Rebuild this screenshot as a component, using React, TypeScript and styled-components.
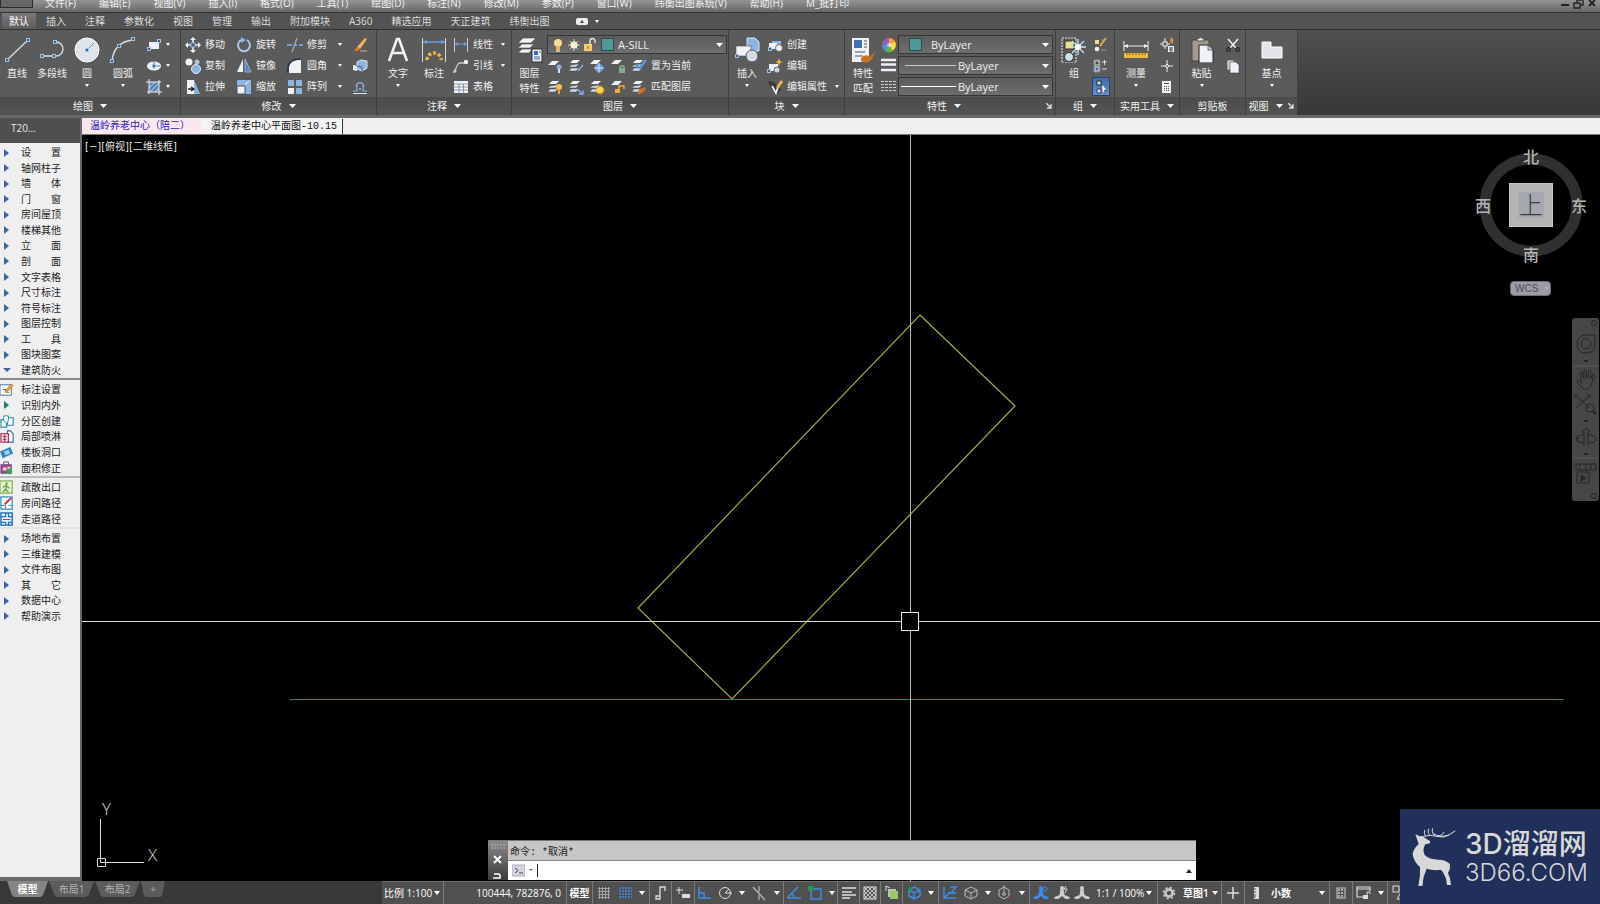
import React from 'react';
import styled, { createGlobalStyle } from 'styled-components';

const Global = createGlobalStyle`
  * { box-sizing: border-box; }
  body { margin: 0; background: #000; }
  button, select, input {
    font: inherit; color: inherit; background: none; border: 0; padding: 0; margin: 0; border-radius: 0;
  }
  button { cursor: default; }
  select { appearance: none; outline: none; }
  option { color: #000; }
  svg { display: block; flex: none; }
`;

const Page = styled.div`
  position: relative;
  display: flex;
  flex-direction: column;
  min-height: 100vh;
  overflow: hidden;
  font: 10px/15px 'Open Sans', 'Noto Sans CJK SC', sans-serif;
  color: #f0f0f0;
  background: #3a3a3a;
`;

/* ---------- menu bar and ribbon tabs ---------- */

const MenuBar = styled.nav`
  display: flex;
  align-items: flex-end;
  height: 13px;
  overflow: hidden;
  background: linear-gradient(#949494, #686868);
  border-bottom: 1px solid #333;
`;
const AppButton = styled.button`
  width: 33px;
  height: 9px;
  margin-bottom: 4px;
  background: #666;
  border: 1px solid #2c2c2c;
  border-top: 0;
`;
const MenuList = styled.div`
  display: flex;
  flex: 1;
  gap: 23px;
  padding-left: 12px;
  height: 16px;
  margin-bottom: -1px;
  align-items: flex-start;
`;
const MenuItem = styled.button`
  height: 12px;
  line-height: 12px;
  white-space: nowrap;
`;
const WindowButtons = styled.div`
  display: flex;
  gap: 2px;
  padding-right: 1px;
  align-items: flex-end;
`;
const WindowButton = styled.button`
  width: 12px;
  height: 12px;
`;

const TabBar = styled.div`
  display: flex;
  gap: 1px;
  height: 17px;
  background: #535353;
  border-bottom: 1px solid #303030;
`;
const RibbonTab = styled.button<{ $active?: boolean }>`
  height: 16px;
  line-height: 16px;
  padding: 0 ${p => (p.$active ? 7 : 9)}px;
  margin-left: ${p => (p.$active ? 2 : 0)}px;
  color: ${p => (p.$active ? '#fff' : '#dcdcdc')};
  background: ${p => (p.$active ? 'linear-gradient(#7a7a7a, #5c5c5c)' : 'none')};
  white-space: nowrap;
`;
const TabToggle = styled.button`
  display: flex;
  align-items: center;
  gap: 7px;
  padding-left: 17px;
`;

/* ---------- ribbon ---------- */

const RibbonBar = styled.div`
  display: flex;
  height: 88px;
  background: linear-gradient(#505050, #383838);
  border-bottom: 3px solid #686868;
`;
const PanelBox = styled.section<{ $w: number }>`
  flex: none;
  width: ${p => p.$w}px;
  display: flex;
  flex-direction: column;
  border-right: 1px solid #3f3f3f;
  background: #5b5b5b;
`;
const PanelBody = styled.div`
  flex: 1;
  display: flex;
  padding-top: 4px;
`;
const PanelTitle = styled.button<{ $right: number }>`
  position: relative;
  display: flex;
  align-items: center;
  justify-content: center;
  gap: 7px;
  height: 18px;
  padding-right: ${p => p.$right}px;
  background: linear-gradient(#4c4c4c, #535353);
`;
const Launcher = styled.span`
  position: absolute;
  right: 3px;
  top: 6px;
`;
const BigButton = styled.button<{ $w: number }>`
  flex: none;
  width: ${p => p.$w}px;
  display: flex;
  flex-direction: column;
  align-items: center;
  justify-content: flex-start;
`;
const BigIcon = styled.span`
  height: 32px;
  display: flex;
  align-items: center;
`;
const BigCaret = styled.span`
  height: 9px;
  display: flex;
  align-items: center;
`;
const Column = styled.div<{ $ml?: number }>`
  display: flex;
  flex-direction: column;
  flex: none;
  margin-left: ${p => p.$ml ?? 0}px;
`;
const Row = styled.div<{ $gap?: number }>`
  display: flex;
  align-items: center;
  gap: ${p => p.$gap ?? 0}px;
  height: 21px;
`;
const SmallButton = styled.button<{ $w?: number; $on?: boolean }>`
  display: flex;
  align-items: center;
  gap: 4px;
  height: 19px;
  min-width: 16px;
  width: ${p => (p.$w ? p.$w + 'px' : 'auto')};
  justify-content: flex-start;
  white-space: nowrap;
  padding: ${p => (p.$on ? '0 1px' : '0')};
  background: ${p => (p.$on ? 'linear-gradient(#3f68a8, #6a93cf)' : 'none')};
  box-shadow: ${p => (p.$on ? 'inset 0 0 0 1px #27426e' : 'none')};
`;
const SmallLabel = styled.span`
  flex: 1;
  text-align: left;
`;
const Combo = styled.label<{ $w: number }>`
  display: flex;
  align-items: center;
  width: ${p => p.$w}px;
  height: 19px;
  padding: 0 3px 0 2px;
  border: 1px solid #363636;
  background: linear-gradient(#5c5c5c, #6e6e6e);
`;
const ComboSelect = styled.select<{ $pad?: number }>`
  flex: 1;
  min-width: 0;
  height: 17px;
  padding-left: ${p => p.$pad ?? 0}px;
  font-size: 11px;
`;
const Swatch = styled.span<{ $ml: number }>`
  width: 13px;
  height: 13px;
  margin-left: ${p => p.$ml}px;
  background: #4f9a96;
  border: 1px solid #2b4a48;
`;
const LineSample = styled.span<{ $thick?: boolean }>`
  width: ${p => (p.$thick ? 55 : 51)}px;
  height: 1px;
  margin-left: ${p => (p.$thick ? 0 : 4)}px;
  background: ${p => (p.$thick ? '#fff' : '#c8c8c8')};
`;

/* ---------- work area ---------- */

const Work = styled.div`
  flex: 1;
  display: flex;
`;
const Sidebar = styled.aside`
  display: flex;
  flex-direction: column;
  width: 82px;
  background: #efefef;
  border-right: 2px solid #6a6a6a;
  border-bottom: 4px solid #6a6a6a;
  color: #1c1c1c;
`;
const SidebarHeader = styled.h1`
  margin: 0;
  height: 25px;
  padding-left: 11px;
  font-size: 10px;
  font-weight: 400;
  line-height: 20px;
  color: #e8e8e8;
  background: #4f4f4f;
`;
const MenuGroup = styled.div<{ $h: number; $line?: string }>`
  display: grid;
  grid-auto-rows: 1fr;
  height: ${p => p.$h}px;
  padding-top: 2px;
  border-bottom: ${p => (p.$line ? '2px solid ' + p.$line : '0')};
`;
const SideItem = styled.button`
  display: flex;
  align-items: center;
  min-height: 0;
  height: 100%;
  line-height: 15px;
  white-space: pre;
`;
const SideIcon = styled.span<{ $arrow?: boolean }>`
  width: 21px;
  padding-left: ${p => (p.$arrow ? 3 : 0)}px;
`;
const Main = styled.main`
  flex: 1;
  min-width: 0;
  display: flex;
  flex-direction: column;
`;
const DocTabs = styled.div`
  display: flex;
  height: 17px;
  padding-top: 1px;
  background: #efefef;
  border-bottom: 1px solid #777;
`;
const DocTab = styled.button<{ $current?: boolean }>`
  padding: 0 ${p => (p.$current ? 5 : 11)}px 0 ${p => (p.$current ? 10 : 8)}px;
  height: 15px;
  line-height: 15px;
  font-family: 'Liberation Mono', 'Noto Sans CJK SC', monospace;
  color: ${p => (p.$current ? '#111' : '#2a22b8')};
  background: ${p => (p.$current ? '#f4f4f4' : '#fbe8ee')};
  border-right: ${p => (p.$current ? '1px solid #333' : '0')};
  white-space: nowrap;
`;
const Canvas = styled.div`
  position: relative;
  flex: 1;
  background: #000;
  overflow: hidden;
`;
const Drawing = styled.svg`
  position: absolute;
  inset: 0;
  width: 100%;
  height: 100%;
`;
const ViewLabel = styled.div`
  position: absolute;
  left: 3px;
  top: 4px;
  font-family: 'DejaVu Sans', 'Noto Sans CJK SC', sans-serif;
  color: #e6e6e6;
`;
const Compass = styled.div`
  position: absolute;
  right: 15px;
  top: 12px;
  width: 112px;
  height: 120px;
`;
const CompassPoint = styled.button<{ $x: number; $y: number }>`
  position: absolute;
  left: ${p => p.$x}px;
  top: ${p => p.$y}px;
  width: 20px;
  height: 20px;
  line-height: 20px;
  font-size: 16px;
  font-weight: 500;
  color: #b4b4b4;
`;
const CubeFace = styled.button`
  position: absolute;
  left: 36px;
  top: 36px;
  width: 44px;
  height: 44px;
  padding: 8px;
  background: #b4b4b2;
  border: 1px solid #c6c6c4;
`;
const FaceLabel = styled.span`
  display: block;
  height: 26px;
  line-height: 26px;
  font-size: 24px;
  font-weight: 300;
  color: #3c3c40;
  background: #a6a8b0;
`;
const Wcs = styled.button`
  position: absolute;
  right: 49px;
  top: 146px;
  width: 41px;
  height: 15px;
  padding-left: 4px;
  display: flex;
  align-items: center;
  gap: 6px;
  font: 10px/13px 'Liberation Sans', sans-serif;
  color: #4c4c58;
  background: #9c9ca6;
  border: 1px solid #70707a;
  border-radius: 4px;
`;
const NavBar = styled.div`
  position: absolute;
  right: 1px;
  top: 183px;
  width: 27px;
  height: 183px;
  background: #464646;
  border-radius: 3px;
`;
const CommandWindow = styled.form`
  position: absolute;
  left: 406px;
  bottom: 1px;
  width: 708px;
  height: 40px;
  display: flex;
  border-top: 1px solid #777;
`;
const CommandGrip = styled.div`
  width: 20px;
  display: flex;
  flex-direction: column;
  align-items: center;
  background: linear-gradient(#8a8a8a, #3c3c3c);
`;
const CommandBody = styled.div`
  flex: 1;
  display: flex;
  flex-direction: column;
  font-family: 'Liberation Mono', 'Noto Sans CJK SC', monospace;
  color: #222;
`;
const History = styled.output`
  height: 20px;
  line-height: 15px;
  padding: 4px 0 0 2px;
  background: #c6c6c6;
  border-bottom: 1px solid #8a8a8a;
`;
const Prompt = styled.label`
  flex: 1;
  display: flex;
  align-items: center;
  gap: 4px;
  padding: 0 4px;
  background: #fff;
`;
const CommandInput = styled.input`
  flex: 1;
  height: 13px;
  border-left: 1px solid #222;
  outline: none;
`;

/* ---------- status bar ---------- */

const Footer = styled.footer`
  display: flex;
  height: 23px;
  background: #393939;
`;
const LayoutTabs = styled.div`
  display: flex;
  width: 382px;
  padding-left: 7px;
`;
const LayoutTab = styled.button<{ $w: number; $active?: boolean }>`
  width: ${p => p.$w}px;
  height: 16px;
  margin-right: 1px;
  clip-path: polygon(0 0, 100% 0, 88% 88%, 82% 100%, 18% 100%, 12% 88%);
  background: ${p => (p.$active ? '#858585' : '#5c5c5c')};
  color: ${p => (p.$active ? '#fff' : '#b4b4b4')};
  font-weight: ${p => (p.$active ? 700 : 400)};
`;
const StatusBar = styled.div`
  flex: 1;
  min-width: 0;
  display: flex;
  overflow: hidden;
  background: #505050;
  border-top: 1px solid #707070;
`;
const Cell = styled.div<{ $w: number; $sep?: boolean; $pad?: number; $end?: boolean; $bold?: boolean }>`
  flex: none;
  width: ${p => p.$w}px;
  display: flex;
  align-items: center;
  justify-content: ${p => (p.$end ? 'flex-end' : p.$pad === undefined ? 'center' : 'flex-start')};
  padding-left: ${p => (p.$end ? 0 : p.$pad ?? 0)}px;
  padding-right: ${p => (p.$end ? 5 : 0)}px;
  border-right: ${p => (p.$sep ? '1px solid #7c7c7c' : '0')};
  font-weight: ${p => (p.$bold ? 600 : 400)};
  color: #fff;
  white-space: nowrap;
`;
const StatusButton = styled.button`
  display: flex;
  align-items: center;
  justify-content: center;
  height: 20px;
  min-width: 8px;
`;
const StatusSelect = styled.select<{ $w: number }>`
  width: ${p => p.$w}px;
  height: 20px;
`;

const Brand = styled.a`
  position: absolute;
  right: 0;
  bottom: 0;
  width: 200px;
  height: 95px;
  display: flex;
  align-items: center;
  gap: 9px;
  padding-left: 12px;
  color: #d8d8d8;
  text-decoration: none;
  background: #20305a;
`;
const BrandText = styled.span`
  display: flex;
  flex-direction: column;
  white-space: nowrap;
`;
const BrandName = styled.span`
  font: 500 28px/32px Inter, 'Noto Sans CJK SC', sans-serif;
`;
const BrandUrl = styled.span`
  font: 300 24px/26px Inter, sans-serif;
`;

/* ---------- icons ---------- */

const BL = '#8fb4e0';
const W = '#eef1f6';
const Y = '#f0b83c';

const layers = (
  <>
    <path d="M5 2h7l-3 3H2z" fill={W} />
    <path d="M3 7l7-1 1 0-3 3H1zM3 10h8l-3 3H1z" fill="#cfd8e6" stroke="#444" strokeWidth=".4" />
  </>
);
const node = (x: number, y: number) => (
  <rect x={x - 1.5} y={y - 1.5} width="3" height="3" fill="#4a5a70" stroke="#9cc4f0" />
);
const person = (c: string) => (
  <g fill={c}>
    <circle cx="8" cy="3" r="2" />
    <path d="M6.500 4h3l1 6 5 2v2h-4l-3.500-3-3.500 3H.5v-2l5-2z" />
  </g>
);

const art: Record<string, React.ReactNode> = {
  /* draw */
  line: <><path d="M3 23L24 3" stroke="#ddd" strokeWidth="1.3" />{node(3, 23)}{node(24, 3)}</>,
  pline: <><path d="M2 19h15a6.500 6.500 0 0 0 0-14" fill="none" stroke="#ddd" strokeWidth="1.4" />{node(3, 19)}{node(15, 19)}{node(16, 5)}</>,
  circle: <><circle cx="13" cy="13" r="12" fill="#dfe3ea" stroke="#fff" /><path d="M13 13l7-7" stroke="#5f8fc8" />{node(13, 13)}</>,
  arc: <><path d="M2 24Q4 5 23 3" fill="none" stroke="#ddd" strokeWidth="1.4" />{node(2, 24)}{node(9, 9)}{node(23, 2)}</>,
  rect: <><rect x="3" y="5" width="10" height="7" fill={W} />{node(3, 12)}{node(13, 4)}</>,
  ellipse: <><ellipse cx="8" cy="8" rx="7" ry="4.500" fill={W} /><path d="M8 2v9M8 8h6" stroke="#4f7fc0" />{node(8, 8)}</>,
  hatch: <><rect x="3" y="3" width="10" height="10" fill="#5d83b8" /><path d="M3 9l6-6M4 13l9-9M9 13l4-4" stroke="#b9d4f5" /><path d="M3 0v15M0 3h15M13 1v15M1 13h15" stroke={W} /></>,
  /* modify */
  move: <><path d="M8 1v14M1 8h14" stroke={W} strokeWidth="1.6" /><path d="M8 0l3 3H5zM8 16l3-3H5zM0 8l3-3v6zM16 8l-3-3v6z" fill={W} /><rect x="6" y="6" width="4" height="4" fill="#4a5a70" stroke={BL} /></>,
  copy: <><circle cx="4" cy="4" r="3.500" fill={W} /><circle cx="12" cy="4" r="2.500" fill="#b9c2d0" /><circle cx="11" cy="11" r="4.500" fill={BL} stroke="#dce8f8" /></>,
  stretch: <><path d="M2 1h7v14H2z" fill={W} /><path d="M9 1l6 14H9z" fill={BL} /><path d="M3 10h5m-2-2l3 2-3 2" stroke="#222" fill="none" strokeWidth="1.300" /></>,
  rotate: <><path d="M5 3a6 6 0 1 0 6 0" fill="none" stroke="#a9c6ea" strokeWidth="2" /><path d="M5 0v6l5-3z" fill={BL} /></>,
  mirror: <><path d="M7 1v13H1z" fill={W} /><path d="M9 1v13h6z" fill="#5d83b8" stroke={BL} /></>,
  scale: <><rect x="1" y="1" width="14" height="14" fill={BL} /><rect x="1" y="7" width="8" height="8" fill={W} stroke="#456" /><path d="M9 6l4-4" stroke="#fff" /></>,
  trim: <><path d="M0 8h5M7 8h3m2 0h4" stroke={BL} strokeWidth="1.500" /><path d="M10 1L5 15" stroke={BL} strokeWidth="1.200" /></>,
  fillet: <><path d="M2 15V9q1-7 12-8v14z" fill={W} /><path d="M1 15V9Q2 1 14 1" stroke="#23344f" strokeWidth="1.500" fill="none" /></>,
  array: <><rect x="1" y="1" width="6" height="6" fill={BL} /><rect x="9" y="1" width="6" height="6" fill={BL} /><rect x="1" y="9" width="6" height="6" fill={W} /><rect x="9" y="9" width="6" height="6" fill={BL} /></>,
  erase: <><path d="M5 10L13 1l2 1-7 10z" fill="#f2b468" /><path d="M5 10l3 2-3 2H2z" fill="#e77b28" /><path d="M8 14h7" stroke="#e8a860" /></>,
  explode: <><path d="M5 4l4-2 6 1v7l-5 3-5-2z" fill={BL} stroke="#dce8f8" /><path d="M1 7l4 1v5l-4-1z" fill={W} /><path d="M5 8l5 1v4" stroke="#3b5f92" fill="none" /></>,
  offset: <><path d="M1 12h4V9a3.500 3.500 0 1 1 6 0v3h4" fill="none" stroke={BL} strokeWidth="1.200" /><path d="M1 14.500h14" stroke="#cfe0f5" /><path d="M7 10h2" stroke="#cfe0f5" /></>,
  /* annotate */
  text: <path d="M4 24L12 2h2l8 22M7 16h12" fill="none" stroke="#f2f2f2" strokeWidth="2.600" />,
  dim: <><path d="M1.500 1v24M24.500 1v24" stroke="#d8d8d8" /><path d="M2 5h22" stroke="#6aa0e6" strokeWidth="1.400" /><path d="M2 5l4-2v4zM24 5l-4-2v4z" fill="#6aa0e6" /><path d="M6 23a7 7 0 0 1 14 0" fill="none" stroke={Y} strokeWidth="3.500" strokeDasharray="3 2" /></>,
  linear: <><path d="M1.500 1v14M14.500 1v14" stroke="#ccc" /><path d="M2 7h12" stroke="#6aa0e6" /><path d="M2 7l3-2v4zM14 7l-3-2v4z" fill="#6aa0e6" /></>,
  leader: <><path d="M2 14q2-9 5-9h5" stroke="#ccc" fill="none" strokeWidth="1.300" /><circle cx="13" cy="4" r="2.200" fill={W} /><path d="M0 15l4-1-3-3z" fill="#ccc" /></>,
  table: <><rect x="1" y="2" width="14" height="12" fill={W} /><path d="M1 5h14M1 8h14M1 11h14M6 5v9M10.500 5v9" stroke="#6f7a8c" strokeWidth=".7" /></>,
  /* layers */
  layerProps: <><path d="M6 1h13l-5 5H1zM5 7h12l-4 4H1zM5 12h10l-3 4H1z" fill={W} stroke="#444" strokeWidth=".6" /><rect x="15" y="12" width="10" height="13" fill={W} stroke="#333" /><rect x="17" y="14" width="4" height="4" fill="#3b66b0" /><path d="M17 20h6M17 22h6M22 15h2" stroke="#3b66b0" /></>,
  bulb: <><circle cx="8" cy="6" r="4" fill="#fbd98a" /><path d="M6 9h4v4H6z" fill="#e8b45c" /><path d="M6 14h4" stroke="#ddd" strokeWidth="1.500" /></>,
  sun: <><path d="M8 2v12M2 8h12M4 4l8 8M12 4l-8 8" stroke="#e5d6a6" /><circle cx="8" cy="8" r="3.500" fill="#fff3c8" /></>,
  lock: <><rect x="2" y="7" width="8" height="7" fill="#f4cf6c" /><path d="M8 7V4a2.500 2.500 0 0 1 5 0v2" fill="none" stroke="#e8e8e8" strokeWidth="1.300" /><path d="M6 9v3" stroke="#664" /></>,
  lOff: <><path d="M5 3h7L8 7H1z" fill={W} /><circle cx="12" cy="9" r="2.500" fill={BL} /><path d="M12 11v4" stroke="#cfe0f5" strokeWidth="2" /></>,
  lIso: <>{layers}<path d="M10 13l5-6" stroke="#7fb0f0" strokeWidth="1.500" /></>,
  lFreeze: <><path d="M5 2h7L8 6H1z" fill={W} /><circle cx="10" cy="10" r="4" fill="#6aa0e6" /><path d="M10 5v10M5 10h10" stroke="#d4e6fc" /></>,
  lLock: <><path d="M5 2h7L8 6H1z" fill={W} /><rect x="9" y="10" width="6" height="5" fill="#7fb08f" /><path d="M10 10V8h4v2" stroke="#a9cbb5" fill="none" /></>,
  lCur: <>{layers}<path d="M5 7l4 3 6-8" stroke="#5d95e0" strokeWidth="2.500" fill="none" /></>,
  lOn: <>{layers}<circle cx="12" cy="8" r="3" fill="#fbc04a" /><path d="M12 10v5" stroke="#e9a030" strokeWidth="2" /></>,
  lUniso: <>{layers}<path d="M9 10l6 5m0-4v4h-4" stroke="#7fb0f0" strokeWidth="1.300" fill="none" /></>,
  lThaw: <>{layers}<circle cx="11" cy="11" r="3.500" fill="#ffd84a" stroke="#f0b020" strokeDasharray="1 1" strokeWidth="2" /></>,
  lUnlock: <><path d="M5 2h7L8 6H1z" fill={W} /><rect x="5" y="10" width="5" height="4" fill="#f0b030" /><path d="M9 10V7h5v3" stroke="#f0b030" strokeWidth="1.400" fill="none" /></>,
  lMatch: <>{layers}<path d="M7 12q4-5 8-3-2 6-8 6z" fill="#cf6f28" /></>,
  /* block */
  insert: <><path d="M13 1h8l4 4v9H13z" fill={BL} stroke="#dce8f8" /><rect x="2" y="9" width="15" height="10" fill={W} stroke="#555" strokeWidth=".6" /><circle cx="18" cy="19" r="6" fill="#d4dae4" stroke="#50596a" />{node(3, 19)}</>,
  bCreate: <><rect x="5" y="4" width="9" height="7" fill={BL} /><rect x="2" y="6" width="8" height="6" fill={W} /><circle cx="12" cy="11" r="3.500" fill={W} stroke="#667" />{node(3, 12)}</>,
  bEdit: <><rect x="2" y="6" width="9" height="7" fill={W} /><circle cx="10" cy="12" r="3" fill="#cbd3df" stroke="#667" /><path d="M12 0l1 3 3 1-3 1-1 3-1-3-3-1 3-1z" fill={Y} />{node(2, 13)}</>,
  bAttr: <><path d="M1 2l6 1 7 8-4 4-7-7z" fill="#3a3a3a" /><path d="M5 7l4 7 2-6" stroke="#fff" strokeWidth="1.600" fill="none" /><path d="M9 8l5-7 2 2-5 7z" fill={Y} /></>,
  /* properties */
  matchProps: <><rect x="2" y="1" width="17" height="24" fill={W} /><rect x="4" y="3" width="8" height="8" fill="#3f6fb5" /><path d="M14 4h3M14 7h3M14 10h3M5 15h10M5 19h8" stroke="#555" /><path d="M11 21q5-5 9-1l5-6-3 8q-5 6-11 2z" fill="#c9731f" /></>,
  wheel: <><circle cx="8" cy="8" r="7" fill="#e85030" /><path d="M8 8V1a7 7 0 0 1 6 4z" fill="#f3a52c" /><path d="M8 8l6-3.500A7 7 0 0 1 11 14z" fill="#e9e04a" /><path d="M8 8l4 6a7 7 0 0 1-8 0z" fill="#63b347" /><path d="M8 8l-4 6a7 7 0 0 1-3-6z" fill="#3e9bd8" /><path d="M8 8H1a7 7 0 0 1 7-7z" fill="#8f5cc4" /><circle cx="8" cy="8" r="2" fill="#fff" opacity=".6" /></>,
  weight: <path d="M0 2h15M0 6.500h15M0 12h15" stroke={W} strokeWidth="2.500" />,
  ltype: <path d="M0 2.500h15M0 5.500h15M0 8.500h15M0 11.500h15" stroke="#ccc" strokeDasharray="3 1" />,
  /* group */
  group: <><rect x="1" y="1" width="14" height="25" fill="none" stroke="#eee" strokeDasharray="2 1" /><rect x="4" y="4" width="9" height="8" fill="#e8e28a" stroke="#333" /><circle cx="8" cy="20" r="4.500" fill="#cfe0e8" stroke="#333" /><path d="M17 2v16M9 10h16M11 4l12 12M23 4L11 16" stroke="#bfe4ff" strokeWidth="1.300" /><circle cx="17" cy="10" r="3" fill="#fff" /></>,
  ungroup: <><rect x="3" y="3" width="4" height="4" fill="#e8e28a" /><circle cx="5" cy="12" r="2.300" fill={W} /><path d="M8 9l6-8" stroke={Y} strokeWidth="1.500" /><path d="M9 13h5M9 3h3" stroke="#999" /></>,
  gEdit: <><rect x="2" y="2" width="6" height="12" fill="none" stroke="#aaa" strokeDasharray="1 1" /><rect x="3" y="3" width="4" height="4" fill="#444" stroke="#ddd" /><rect x="3" y="9" width="4" height="4" fill="#3f6fd0" stroke="#ddd" /><path d="M10 4h5M12.500 2v5M10 11h5" stroke="#ddd" /></>,
  gSel: <><rect x="4" y="2" width="4" height="4" fill="#dbe8c0" stroke="#234" /><circle cx="6" cy="12" r="2.300" fill="#cfe0f5" stroke="#234" /><path d="M9 5l5 6-3 0 1 3-2 0-1-2z" fill="#fff" stroke="#234" strokeWidth=".5" /></>,
  /* utilities */
  measure: <><path d="M1 4v10M25 4v10M1 9h24" stroke="#eee" /><path d="M1 9l4-2v4zM25 9l-4-2v4z" fill="#eee" /><rect x="1" y="16" width="24" height="5" fill={Y} /><path d="M4 16v2M7 16v2M10 16v2M13 16v2M16 16v2M19 16v2M22 16v2" stroke="#8c6410" /></>,
  quick: <><path d="M6 1v11M1 7h10" stroke={W} /><rect x="4" y="5" width="4" height="4" fill="#555" stroke={W} /><path d="M12 0q4 3 1 7-3-3-1-7z" fill="#f08a2c" /><rect x="9" y="9" width="6" height="6" fill={W} /><path d="M10 11h4M10 13h4M12 10v5" stroke="#555" /></>,
  point: <><path d="M8 2v12M2 8h12" stroke={W} /><path d="M8 6l2 2-2 2-2-2z" fill="#888" stroke={W} /></>,
  calc: <><rect x="3" y="2" width="9" height="12" fill={W} /><path d="M5 4.500h5" stroke="#555" /><path d="M5 7.500h6M5 9.500h6M5 11.500h6" stroke="#555" strokeDasharray="1 1" /></>,
  paste: <><rect x="3" y="3" width="17" height="21" fill="#a39a90" stroke="#4a453f" /><path d="M8 4V2q4-3 7 0v2z" fill="#eee" stroke="#555" /><path d="M10 8h9l5 5v13H10z" fill={W} stroke="#222" /><path d="M19 8v5h5" fill="#ccc" stroke="#222" strokeWidth=".6" /></>,
  cut: <><path d="M3 2l8 9M13 2l-8 9" stroke={W} strokeWidth="1.500" /><circle cx="3.500" cy="12.500" r="1.800" fill="none" stroke="#222" strokeWidth="1.200" /><circle cx="12.500" cy="12.500" r="1.800" fill="none" stroke="#222" strokeWidth="1.200" /></>,
  copyclip: <><path d="M2 2h7v10H2z" fill="#ccc" stroke="#444" strokeWidth=".5" /><path d="M5 4h6l3 3v8H5z" fill={W} stroke="#444" strokeWidth=".6" /></>,
  base: <path d="M3 5h9v5h11v11H3z" fill="#e2e4e8" stroke="#fff" />,
  /* tangent palette */
  pNote: <><rect x="0" y="3" width="12" height="11" fill="#fff" stroke="#3a6ea5" /><path d="M3 8h3v3h4" stroke="#8a6f20" fill="none" /><path d="M6 9l6-7 2 2-6 6z" fill="#f0a832" stroke="#b23a2a" strokeWidth=".6" /></>,
  pZone: <><path d="M1 6h6v8H1zM8 4h6v8H8z" fill="#fff" stroke="#2b8fa5" strokeWidth="1.200" /><path d="M4 2h5v5l-2 3-3-3z" fill="#fff" stroke="#2b8fa5" /></>,
  pSpray: <><path d="M8 2h3l3 3v9H8z" fill="#fff" stroke="#2b6fa5" strokeWidth="1.200" /><rect x="1" y="5" width="8" height="9" fill="#f6dfe6" stroke="#a82850" strokeWidth="1.200" /><path d="M3 8h4M3 11h4M5 6v8" stroke="#a82850" /></>,
  pHole: <><path d="M0 7l11-5 3 7-11 5z" fill="#2f86c4" /><path d="M4 7l5-2 2 4-5 2z" fill="#9fd0ec" /></>,
  pArea: <><rect x="1" y="4" width="11" height="9" fill="#b0456c" stroke="#5a4a9a" /><path d="M3 7h4v3H3zM8 6h3v3H8z" fill="#f1d4de" /><circle cx="10" cy="11" r="3" fill="#3aa05a" /><path d="M4 4V1h5v3" fill="none" stroke="#5a4a9a" /></>,
  pExit: <><rect x="0" y="1" width="13" height="13" fill="#e4f2cf" stroke="#7ea848" strokeWidth="1.200" /><circle cx="7" cy="4" r="1.300" fill="#6a9a34" /><path d="M3 8l3-2 2 1 2 2M7 7l-1 3-3 3M6 10l3 3" stroke="#6a9a34" strokeWidth="1.300" fill="none" /></>,
  pRoom: <><rect x="1" y="1" width="12" height="13" fill="#fff" stroke="#2b7fb5" strokeWidth="1.200" /><path d="M1 10h5v4M9 10h4" stroke="#2b7fb5" fill="none" /><path d="M5 9l7-7" stroke="#c02a48" strokeWidth="2" /></>,
  pPath: <><rect x="1" y="1" width="12" height="13" fill="#e8f4fb" stroke="#1f72b0" strokeWidth="1.500" /><path d="M1 5h5V1M9 1v4h4M1 11h5v3M9 14v-3h4" stroke="#1f72b0" fill="none" strokeWidth="1.300" /><path d="M3 8h8" stroke="#c02a48" /></>,
  /* status bar */
  grid: <path d="M3.500 2v12M6.500 2v12M9.500 2v12M12.500 2v12M2 3.500h12M2 6.500h12M2 9.500h12M2 12.500h12" stroke="#b4b4b4" strokeWidth=".8" />,
  snap: <path d="M2 3h13M2 6h13M2 9h13M2 12h13" stroke="#3f8be8" strokeDasharray="2 1" strokeWidth="1.600" />,
  infer: <path d="M7 13V2h5v4M3 11h4v3H3z" fill="none" stroke="#ddd" strokeWidth="1.300" />,
  dyn: <><path d="M4 2v7M1 5h7" stroke="#ddd" /><rect x="7" y="9" width="8" height="4" fill="#ddd" /></>,
  ortho: <path d="M3 2v11h12M3 8h5v5" fill="none" stroke="#3f8be8" strokeWidth="1.500" />,
  polar: <><circle cx="8" cy="8" r="5.500" fill="none" stroke="#ddd" /><path d="M8 8h7M8 8l4-4" stroke="#ddd" /></>,
  iso: <path d="M2 2l12 13M8 1v6M8 10v5" stroke="#bbb" strokeWidth="1.200" />,
  track: <path d="M1 13h14M2 12L12 2M8 13a5 5 0 0 0-2-4" fill="none" stroke="#3f8be8" strokeWidth="1.500" />,
  osnap: <><rect x="4" y="4" width="10" height="10" fill="none" stroke="#3f8be8" strokeWidth="1.500" /><rect x="1" y="1" width="5" height="5" fill="#1f9a50" /></>,
  lwt: <path d="M1 3h14M1 7h10M1 10h14M1 13h8" stroke="#ddd" strokeWidth="1.700" />,
  trans: <><rect x="2" y="2" width="12" height="12" fill="none" stroke="#ddd" /><path d="M2 6l4-4M2 10l8-8M2 14L14 2M6 14l8-8M10 14l4-4M2 10l4 4M2 6l8 8M2 2l12 12M6 2l8 8M10 2l4 4" stroke="#ddd" strokeWidth=".8" /></>,
  cycle: <><rect x="6" y="6" width="8" height="8" fill="#9fc46f" /><path d="M4 4h8v2H6v6H4z" fill="#b9c9a5" /><path d="M2 6V1l4 2" stroke="#ddd" fill="none" /></>,
  osnap3: <><path d="M8 2l6 3v6l-6 3-5-3V5zM3 5l5 3 6-3M8 8v6" fill="none" stroke="#3f8be8" strokeWidth="1.500" /><circle cx="4" cy="4" r="2" fill="#1f9a50" /></>,
  ucs: <path d="M2 2v11h12M3 12l5-5M8 2h6L9 8h5" fill="none" stroke="#3f8be8" strokeWidth="1.500" />,
  cube: <path d="M8 2l6 3v6l-6 3-6-3V5zM2 5l6 3 6-3M8 8v6" fill="none" stroke="#bbb" />,
  gizmo: <><path d="M8 2l5 3v6l-5 3-5-3V5z" fill="none" stroke="#bbb" /><path d="M8 0v8" stroke="#aaa" /><circle cx="8" cy="9" r="2" fill="#999" /><path d="M11 11l3 2" stroke="#d04040" /></>,
  p1: <>{person('#3f8be8')}<circle cx="12" cy="4" r="2" stroke="#3f8be8" fill="none" /></>,
  p2: <>{person('#ccc')}<path d="M12 1l-2 3h3l-2 4" stroke="#ddd" fill="none" /></>,
  p3: person('#ccc'),
  gear: <><circle cx="8" cy="8" r="3.500" fill="none" stroke="#ccc" strokeWidth="2.500" /><circle cx="8" cy="8" r="5.500" fill="none" stroke="#ccc" strokeWidth="1.600" strokeDasharray="2.300 2" /></>,
  plus: <path d="M8 2v12M2 8h12" stroke="#ddd" strokeWidth="1.500" />,
  ruler: <><rect x="6" y="2" width="5" height="12" fill="#ddd" /><path d="M6 4h2M6 7h2M6 10h2M6 12h2" stroke="#555" /></>,
  quickp: <><rect x="4" y="3" width="8" height="10" fill="none" stroke="#ccc" /><path d="M5 5h6M5 8h6M5 11h6" stroke="#ccc" strokeDasharray="2 1" strokeWidth="1.400" /></>,
  uilock: <><path d="M7 12H1V2h13v4M1 4h13" fill="none" stroke="#ddd" strokeWidth="1.200" /><rect x="7" y="10" width="5" height="4" fill="#ddd" /><path d="M11 10V7h3v2" stroke="#ddd" fill="none" /></>,
  isolate: <><rect x="2" y="1" width="6" height="6" fill="none" stroke="#ddd" /><path d="M6 14l4-7 4 7z" fill="none" stroke="#ddd" /><circle cx="12" cy="5" r="3" fill="none" stroke="#ddd" /></>,
};

const Icon = ({ n, s = 16 }: { n: string; s?: number }) => (
  <svg width={s} height={s} viewBox={s > 20 ? '0 0 26 26' : '0 0 16 16'} fill="none" aria-hidden="true">
    {art[n]}
  </svg>
);
const Caret = ({ w = 4, up }: { w?: number; up?: boolean }) => (
  <svg width={w} height={w === 4 ? 3 : 4} viewBox="0 0 8 5" preserveAspectRatio="none" aria-hidden="true">
    <path d={up ? 'M0 5h8L4 0z' : 'M0 0h8L4 5z'} fill={up ? '#222' : '#fff'} />
  </svg>
);

/* ---------- ribbon parts ---------- */

const Panel = ({ w, title, caret = true, launcher, children }: {
  w: number; title: string; caret?: boolean; launcher?: boolean; children: React.ReactNode;
}) => (
  <PanelBox $w={w}>
    <PanelBody>{children}</PanelBody>
    <PanelTitle $right={launcher ? 12 : 0}>
      {title}
      {caret && <Caret w={7} />}
      {launcher && (
        <Launcher>
          <svg width="6" height="6" viewBox="0 0 6 6"><path d="M0 0l5 5M5 1v4H1" stroke="#ddd" fill="none" strokeWidth="1.300" /></svg>
        </Launcher>
      )}
    </PanelTitle>
  </PanelBox>
);
const Big = ({ w, icon, label, second, caret }: {
  w: number; icon: string; label: string; second?: string; caret?: boolean;
}) => (
  <BigButton $w={w}>
    <BigIcon><Icon n={icon} s={26} /></BigIcon>
    <span>{label}</span>
    {second && <span>{second}</span>}
    {caret && <BigCaret><Caret /></BigCaret>}
  </BigButton>
);
const Small = ({ icon, label, w, caret, on, name }: {
  icon: string; label?: string; w?: number; caret?: boolean; on?: boolean; name?: string;
}) => (
  <Row>
    <SmallButton $w={w} $on={on} aria-label={name}>
      <Icon n={icon} />
      {label && <SmallLabel>{label}</SmallLabel>}
      {caret && <Caret />}
    </SmallButton>
  </Row>
);

const Ribbon = () => (
  <RibbonBar>
    <Panel w={181} title="绘图">
      <Big w={34} icon="line" label="直线" />
      <Big w={36} icon="pline" label="多段线" />
      <Big w={34} icon="circle" label="圆" caret />
      <Big w={38} icon="arc" label="圆弧" caret />
      <Column $ml={4}>
        <Small icon="rect" caret w={25} name="矩形" />
        <Small icon="ellipse" caret w={25} name="椭圆" />
        <Small icon="hatch" caret w={25} name="图案填充" />
      </Column>
    </Panel>
    <Panel w={196} title="修改">
      <Column $ml={4}>
        <Small icon="move" label="移动" w={51} />
        <Small icon="copy" label="复制" w={51} />
        <Small icon="stretch" label="拉伸" w={51} />
      </Column>
      <Column>
        <Small icon="rotate" label="旋转" w={51} />
        <Small icon="mirror" label="镜像" w={51} />
        <Small icon="scale" label="缩放" w={51} />
      </Column>
      <Column>
        <Small icon="trim" label="修剪" caret w={55} />
        <Small icon="fillet" label="圆角" caret w={55} />
        <Small icon="array" label="阵列" caret w={55} />
      </Column>
      <Column $ml={10}>
        <Small icon="erase" name="删除" />
        <Small icon="explode" name="分解" />
        <Small icon="offset" name="偏移" />
      </Column>
    </Panel>
    <Panel w={135} title="注释">
      <Big w={42} icon="text" label="文字" caret />
      <Big w={30} icon="dim" label="标注" />
      <Column $ml={4}>
        <Small icon="linear" label="线性" caret w={52} />
        <Small icon="leader" label="引线" caret w={52} />
        <Small icon="table" label="表格" w={52} />
      </Column>
    </Panel>
    <Panel w={217} title="图层">
      <Big w={35} icon="layerProps" label="图层" second="特性" />
      <Column>
        <Row>
          <Combo $w={180}>
            <Icon n="bulb" /><Icon n="sun" /><Icon n="lock" /><Swatch $ml={3} />
            <ComboSelect $pad={4} aria-label="图层"><option>A-SILL</option></ComboSelect>
            <Caret w={7} />
          </Combo>
        </Row>
        <Row $gap={5}>
          <Small icon="lOff" name="关闭图层" /><Small icon="lIso" name="隔离" />
          <Small icon="lFreeze" name="冻结" /><Small icon="lLock" name="锁定" />
          <Small icon="lCur" label="置为当前" />
        </Row>
        <Row $gap={5}>
          <Small icon="lOn" name="打开图层" /><Small icon="lUniso" name="取消隔离" />
          <Small icon="lThaw" name="解冻" /><Small icon="lUnlock" name="解锁" />
          <Small icon="lMatch" label="匹配图层" />
        </Row>
      </Column>
    </Panel>
    <Panel w={116} title="块">
      <Big w={36} icon="insert" label="插入" caret />
      <Column $ml={2}>
        <Small icon="bCreate" label="创建" w={72} />
        <Small icon="bEdit" label="编辑" w={72} />
        <Small icon="bAttr" label="编辑属性" caret w={72} />
      </Column>
    </Panel>
    <Panel w={211} title="特性" launcher>
      <Big w={36} icon="matchProps" label="特性" second="匹配" />
      <Column>
        <Small icon="wheel" name="颜色" /><Small icon="weight" name="线宽" /><Small icon="ltype" name="线型" />
      </Column>
      <Column $ml={1}>
        <Row>
          <Combo $w={155}>
            <Swatch $ml={8} />
            <ComboSelect $pad={9} aria-label="对象颜色"><option>ByLayer</option></ComboSelect>
            <Caret w={7} />
          </Combo>
        </Row>
        <Row>
          <Combo $w={155}>
            <LineSample />
            <ComboSelect $pad={2} aria-label="线宽"><option>ByLayer</option></ComboSelect>
            <Caret w={7} />
          </Combo>
        </Row>
        <Row>
          <Combo $w={155}>
            <LineSample $thick />
            <ComboSelect $pad={2} aria-label="线型"><option>ByLayer</option></ComboSelect>
            <Caret w={7} />
          </Combo>
        </Row>
      </Column>
    </Panel>
    <Panel w={59} title="组">
      <Big w={36} icon="group" label="组" />
      <Column>
        <Small icon="ungroup" name="解除编组" /><Small icon="gEdit" name="组编辑" /><Small icon="gSel" on name="启用组选择" />
      </Column>
    </Panel>
    <Panel w={65} title="实用工具">
      <Big w={42} icon="measure" label="测量" caret />
      <Column $ml={2}>
        <Small icon="quick" name="快速选择" /><Small icon="point" name="点坐标" /><Small icon="calc" name="计算器" />
      </Column>
    </Panel>
    <Panel w={66} title="剪贴板" caret={false}>
      <Big w={43} icon="paste" label="粘贴" caret />
      <Column $ml={2}>
        <Small icon="cut" name="剪切" /><Small icon="copyclip" name="复制剪裁" />
      </Column>
    </Panel>
    <Panel w={52} title="视图" launcher>
      <Big w={51} icon="base" label="基点" caret />
    </Panel>
  </RibbonBar>
);

/* ---------- sidebar ---------- */

const gap = '\u3000\u3000';
const topItems = ['设' + gap + '置', '轴网柱子', '墙' + gap + '体', '门' + gap + '窗', '房间屋顶', '楼梯其他', '立' + gap + '面', '剖' + gap + '面', '文字表格', '尺寸标注', '符号标注', '图层控制', '工' + gap + '具', '图块图案', '建筑防火'];
const fireItems = [['标注设置', 'pNote'], ['识别内外', ''], ['分区创建', 'pZone'], ['局部喷淋', 'pSpray'], ['楼板洞口', 'pHole'], ['面积修正', 'pArea']];
const exitItems = [['疏散出口', 'pExit'], ['房间路径', 'pRoom'], ['走道路径', 'pPath']];
const endItems = ['场地布置', '三维建模', '文件布图', '其' + gap + '它', '数据中心', '帮助演示'];

const Side = ({ label, icon, open, green }: { label: string; icon?: string; open?: boolean; green?: boolean }) => (
  <SideItem>
    <SideIcon $arrow={!icon}>
      {icon ? <Icon n={icon} s={15} /> : (
        <svg width="8" height="8" viewBox="0 0 8 8">
          <path d={open ? 'M0 2h8L4 6z' : 'M1 0l5 4-5 4z'} fill={green ? '#1f7a74' : '#3c64a0'} />
        </svg>
      )}
    </SideIcon>
    {label}
  </SideItem>
);

const Palette = () => (
  <Sidebar>
    <SidebarHeader>T20...</SidebarHeader>
    <MenuGroup $h={237} $line="#8a8a8a">
      {topItems.map((t, i) => <Side key={t} label={t} open={i === topItems.length - 1} />)}
    </MenuGroup>
    <MenuGroup $h={98} $line="#bcbcbc">
      {fireItems.map(([t, ic]) => <Side key={t} label={t} icon={ic || undefined} green />)}
    </MenuGroup>
    <MenuGroup $h={51} $line="#e2e2e2">
      {exitItems.map(([t, ic]) => <Side key={t} label={t} icon={ic} />)}
    </MenuGroup>
    <MenuGroup $h={95}>
      {endItems.map(t => <Side key={t} label={t} />)}
    </MenuGroup>
  </Sidebar>
);

/* ---------- canvas ---------- */

const Viewport = () => (
  <Canvas>
    <Drawing>
      <line x1="208" y1="564.500" x2="1482" y2="564.500" stroke="#2f7d6c" />
      <polygon points="838,180 933,271 650,564 556,473" fill="none" stroke="#a9ab3c" strokeWidth="1.200" />
      <line x1="828.500" y1="0" x2="828.500" y2="100%" stroke="#b8b8b8" />
      <line x1="0" y1="486.500" x2="100%" y2="486.500" stroke="#d8d8d8" />
      <rect x="819.500" y="477.500" width="17" height="18" fill="#000" stroke="#e6e6e6" />
      <path d="M18.500 684v43.500H62M15.500 723.500h8v8h-8z" fill="none" stroke="#ddd" />
      <text x="20" y="680" fill="#ddd" fontFamily="Open Sans" fontWeight="300" fontSize="17">Y</text>
      <text x="66" y="726" fill="#ddd" fontFamily="Open Sans" fontWeight="300" fontSize="17">X</text>
    </Drawing>
    <ViewLabel>[−][俯视][二维线框]</ViewLabel>
    <Compass>
      <svg width="112" height="120" viewBox="0 0 112 120">
        <circle cx="58" cy="58" r="46" fill="none" stroke="#303030" strokeWidth="11" />
      </svg>
      <CompassPoint $x={48} $y={0}>北</CompassPoint>
      <CompassPoint $x={0} $y={49}>西</CompassPoint>
      <CompassPoint $x={96} $y={49}>东</CompassPoint>
      <CompassPoint $x={48} $y={98}>南</CompassPoint>
      <CubeFace><FaceLabel>上</FaceLabel></CubeFace>
    </Compass>
    <Wcs>WCS <svg width="6" height="4" viewBox="0 0 6 4"><path d="M0 0h6L3 3z" fill="#b4b4bc" /></svg></Wcs>
    <NavBar>
      <svg width="27" height="183" viewBox="0 0 27 183" fill="none" stroke="#262626" strokeWidth="1">
        <circle cx="22" cy="5" r="2.500" /><circle cx="22" cy="178" r="2.500" />
        <path d="M5 26q0-9 10-9h8v10q0 8-9 8-9 0-9-9z" /><circle cx="14" cy="26" r="5" />
        <path d="M1 48h25M1 140h25" stroke="#5c5c5c" />
        <path d="M10 70l-5-6 1-2 4 3-2-10 2-1 2 7 0-9 2 0 1 8 2-8 2 1-1 8 3-5 1 1-3 11q-3 5-9 2z" />
        <path d="M4 78l14 12M17 78L4 90M3 80v-3h3M15 77h3v3" /><circle cx="18" cy="90" r="4" /><path d="M21 93l3 3" strokeWidth="2" />
        <path d="M12 128v-14h-2l4-4 4 4h-2v14M4 121q0-4 8-4M16 117q8 0 8 4t-8 4M4 121q1 4 8 4M7 119l-3 2 3 3" />
        <path d="M4 146h20v6H4zM8 146v6M14 146v6M19 146v6M5 154h12v11H5z" /><path d="M9 157l5 3-5 3z" fill="#262626" />
        <path d="M12 43h4M12 103h4M12 136h4" strokeWidth="2" />
      </svg>
    </NavBar>
    <CommandWindow onSubmit={e => e.preventDefault()}>
      <CommandGrip>
        <svg width="20" height="39" viewBox="0 0 20 39" fill="none">
          <path d="M3 4h14M3 7h14" stroke="#b4b4b4" strokeDasharray="2 1" />
          <path d="M6 15l7 7M13 15l-7 7" stroke="#fff" strokeWidth="1.800" />
          <path d="M6 33h4q3 0 2 4H5" stroke="#fff" strokeWidth="1.600" />
        </svg>
      </CommandGrip>
      <CommandBody>
        <History>命令: *取消*</History>
        <Prompt>
          <svg width="13" height="13" viewBox="0 0 13 13">
            <rect x="0" y="1" width="13" height="11" fill="#d5d5e0" stroke="#b0b0c0" />
            <path d="M3 4l3 2.500L3 9M7 9h4" stroke="#445" fill="none" />
          </svg>
          <svg width="4" height="3" viewBox="0 0 4 3"><path d="M0 0h4L2 2z" fill="#666" /></svg>
          <CommandInput aria-label="命令" />
          <Caret w={6} up />
        </Prompt>
      </CommandBody>
    </CommandWindow>
  </Canvas>
);

/* ---------- status bar ---------- */

type Item = [icon: string, width: number, sep?: boolean];
const cellsA: Item[] = [
  ['grid', 22], ['snap', 20], ['v', 15, true], ['infer', 22, true], ['dyn', 23, true], ['ortho', 18],
  ['polar', 24], ['v', 10], ['iso', 24], ['v', 13, true], ['track', 20], ['osnap', 22], ['v', 12, true],
  ['lwt', 22, true], ['trans', 21, true], ['cycle', 22, true], ['osnap3', 21], ['v', 15, true],
  ['ucs', 21], ['cube', 22], ['v', 12], ['gizmo', 20], ['v', 16, true], ['p1', 22], ['p2', 20], ['p3', 20],
];
const Cells = ({ items }: { items: Item[] }) => (
  <>
    {items.map(([n, w, sep], i) => (
      <Cell key={i} $w={w} $sep={sep}>
        <StatusButton aria-label={n}>{n === 'v' ? <Caret w={6} /> : <Icon n={n} />}</StatusButton>
      </Cell>
    ))}
  </>
);

const Status = () => (
  <Footer>
    <LayoutTabs>
      <LayoutTab $w={41} $active>模型</LayoutTab>
      <LayoutTab $w={45}>布局1</LayoutTab>
      <LayoutTab $w={45}>布局2</LayoutTab>
      <LayoutTab $w={24}>+</LayoutTab>
    </LayoutTabs>
    <StatusBar>
      <Cell $w={62} $sep $pad={2}>
        <StatusSelect $w={50} aria-label="比例"><option>比例 1:100</option></StatusSelect><Caret w={6} />
      </Cell>
      <Cell $w={123} $sep $end>100444, 782876, 0</Cell>
      <Cell $w={26} $sep $bold><StatusButton>模型</StatusButton></Cell>
      <Cells items={cellsA} />
      <Cell $w={66} $sep $pad={4}>
        <StatusSelect $w={50} aria-label="视图比例"><option>1:1 / 100%</option></StatusSelect><Caret w={6} />
      </Cell>
      <Cells items={[['gear', 22]]} />
      <Cell $w={42} $sep $pad={3} $bold>
        <StatusSelect $w={29} aria-label="工作空间"><option>草图1</option></StatusSelect><Caret w={6} />
      </Cell>
      <Cells items={[['plus', 23, true], ['ruler', 22]]} />
      <Cell $w={63} $sep $pad={4} $bold>
        <StatusSelect $w={48} aria-label="单位"><option>小数</option></StatusSelect><Caret w={6} />
      </Cell>
      <Cells items={[['quickp', 23, true], ['uilock', 22], ['v', 13, true], ['isolate', 22]]} />
    </StatusBar>
  </Footer>
);

const menus = ['文件(F)', '编辑(E)', '视图(V)', '插入(I)', '格式(O)', '工具(T)', '绘图(D)', '标注(N)', '修改(M)', '参数(P)', '窗口(W)', '纬衡出图系统(V)', '帮助(H)', 'M_批打印'];
const tabs = ['默认', '插入', '注释', '参数化', '视图', '管理', '输出', '附加模块', 'A360', '精选应用', '天正建筑', '纬衡出图'];

export default function App() {
  return (
    <Page>
      <Global />
      <MenuBar>
        <AppButton aria-label="应用程序菜单" />
        <MenuList>{menus.map(m => <MenuItem key={m}>{m}</MenuItem>)}</MenuList>
        <WindowButtons>
          <WindowButton aria-label="最小化"><svg width="12" height="12" viewBox="0 0 12 12"><path d="M2 5h8" stroke="#222" strokeWidth="2" /></svg></WindowButton>
          <WindowButton aria-label="还原"><svg width="12" height="12" viewBox="0 0 12 12"><path d="M1 3h6v5H1zM4 3V0h6v5H7" fill="none" stroke="#222" strokeWidth="1.300" /></svg></WindowButton>
          <WindowButton aria-label="关闭"><svg width="12" height="12" viewBox="0 0 12 12"><path d="M2 0l6 6M8 0L2 6" stroke="#222" strokeWidth="1.800" /></svg></WindowButton>
        </WindowButtons>
      </MenuBar>
      <TabBar>
        {tabs.map((t, i) => <RibbonTab key={t} $active={i === 0}>{t}</RibbonTab>)}
        <TabToggle aria-label="最小化功能区">
          <svg width="12" height="7" viewBox="0 0 12 7"><rect width="12" height="7" rx="2" fill="#eee" /><path d="M4 5h4L6 2z" fill="#444" /></svg>
          <Caret />
        </TabToggle>
      </TabBar>
      <Ribbon />
      <Work>
        <Palette />
        <Main>
          <DocTabs>
            <DocTab>温岭养老中心（陪二）</DocTab>
            <DocTab $current>温岭养老中心平面图-10.15</DocTab>
          </DocTabs>
          <Viewport />
        </Main>
      </Work>
      <Status />
      <Brand href="#">
        <svg width="44" height="60" viewBox="636 80 132 180" aria-hidden="true">
          <path d="M646 102l14 6q8-4 14 4l16 10v7l-14 3q-10 16-2 32 14 14 41 14 25 0 35 14 2 13-6 26 8 17 9 36h-12q0-18-9-32-4-10-10-14-22 4-42-3l-9 24q-3 14-3 27l-13 1q7-30 5-56-20-19-22-40 2-15 18-30l-4-12z" fill="#d8d8d8" />
          <path d="M671 108q20-6 40 0t34-3l20-13M676 106q-6-8-2-16M688 104q-8-9-2-18M703 105q-10-10-6-20M714 108q14-2 18-12M700 100q22 14 46 4" fill="none" stroke="#d8d8d8" strokeWidth="3" strokeLinecap="round" />
        </svg>
        <BrandText>
          <BrandName>3D溜溜网</BrandName>
          <BrandUrl>3D66.COM</BrandUrl>
        </BrandText>
      </Brand>
    </Page>
  );
}
